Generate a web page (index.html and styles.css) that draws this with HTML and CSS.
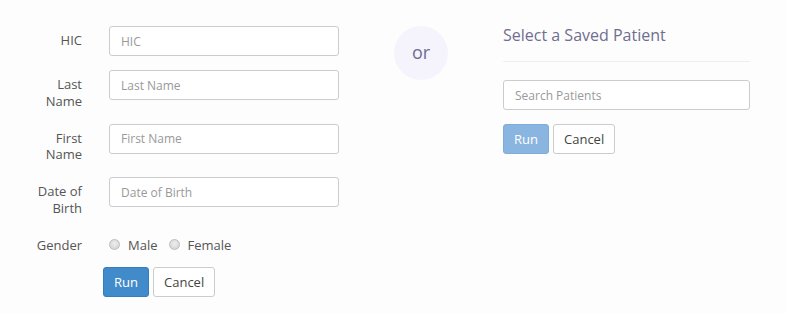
FILE: index.html
```html
<!DOCTYPE html>
<html>
<head>
    <meta charset="UTF-8">
    <title>Find Patient</title>
    <link rel="stylesheet" href="styles.css">
</head>
<body>
    <div class="page">
        <form class="patient-form">
            <div class="row">
                <label class="row-label" for="hic">HIC</label>
                <input class="field" id="hic" type="text" placeholder="HIC">
            </div>
            <div class="row">
                <label class="row-label" for="lastName">Last Name</label>
                <input class="field" id="lastName" type="text" placeholder="Last Name">
            </div>
            <div class="row">
                <label class="row-label" for="firstName">First Name</label>
                <input class="field" id="firstName" type="text" placeholder="First Name">
            </div>
            <div class="row">
                <label class="row-label" for="dob">Date of Birth</label>
                <input class="field" id="dob" type="text" placeholder="Date of Birth">
            </div>
            <div class="row">
                <span class="row-label">Gender</span>
                <div class="radios">
                    <label class="radio"><input type="radio" name="gender"> Male</label>
                    <label class="radio"><input type="radio" name="gender"> Female</label>
                </div>
            </div>
            <div class="actions offset">
                <button type="button" class="btn btn-primary">Run</button>
                <button type="button" class="btn btn-default">Cancel</button>
            </div>
        </form>

        <div class="divider">
            <div class="or">or</div>
        </div>

        <div class="saved">
            <h3 class="saved-title">Select a Saved Patient</h3>
            <hr>
            <input class="field search" type="text" placeholder="Search Patients">
            <div class="actions">
                <button type="button" class="btn btn-primary" disabled>Run</button>
                <button type="button" class="btn btn-default">Cancel</button>
            </div>
        </div>
    </div>
</body>
</html>
```

FILE: styles.css
```css
body {
    margin: 0;
    background-color: #fdfdfd;
    font-family: "Open Sans", Arial, sans-serif;
    font-size: 13px;
    color: #555;
}

.page {
    display: flex;
    padding: 26px 0 0 32px;
}

.patient-form {
    width: 307px;
}

.row {
    display: flex;
    align-items: flex-start;
    margin-bottom: 14px;
}

.row-label {
    width: 50px;
    margin-right: 27px;
    padding-top: 6px;
    line-height: 16.75px;
    text-align: right;
}

.field {
    box-sizing: border-box;
    width: 230px;
    height: 30px;
    padding: 0 11px;
    border: 1px solid #ccc;
    border-radius: 3px;
    background-color: #fff;
    font-family: inherit;
    font-size: 12px;
    color: #555;
}

.field::placeholder {
    color: #999;
}

.radios {
    display: flex;
    gap: 11px;
    padding-top: 6px;
    line-height: 16.75px;
}

.radio {
    display: flex;
    align-items: center;
    gap: 8px;
}

.radio input {
    appearance: none;
    box-sizing: border-box;
    width: 11px;
    height: 11px;
    margin: 0;
    border: 1px solid #bdbdbd;
    border-radius: 50%;
    background: radial-gradient(circle at 50% 40%, #eee, #cfcfcf);
}

.actions {
    display: flex;
    gap: 4px;
}

.offset {
    margin-left: 71px;
    margin-top: 1px;
}

.btn {
    height: 30px;
    padding: 0 10px;
    border: 1px solid transparent;
    border-radius: 3px;
    font-family: inherit;
    font-size: 13px;
    cursor: pointer;
}

.btn-primary {
    width: 46px;
    background-color: #428bca;
    border-color: #357ebd;
    color: #fff;
}

.btn-primary:disabled {
    background-color: #8ab5e0;
    border-color: #80acd9;
    color: #fff;
    cursor: default;
}

.btn-default {
    background-color: #fff;
    border-color: #ccc;
    color: #444;
}

.divider {
    width: 54px;
    margin: 0 55px;
}

.or {
    width: 54px;
    height: 54px;
    border-radius: 50%;
    background-color: #f5f4fd;
    display: flex;
    align-items: center;
    justify-content: center;
    font-size: 18px;
    color: #6e6d8d;
    padding-bottom: 2px;
    box-sizing: border-box;
}

.saved {
    width: 247px;
}

.saved-title {
    margin: 0;
    font-size: 16px;
    font-weight: normal;
    line-height: 18px;
    color: #6f6e90;
}

.saved hr {
    margin: 17px 0 18px;
    border: 0;
    border-top: 1px solid #eee;
}

.search {
    width: 247px;
    margin-bottom: 14px;
}
```
